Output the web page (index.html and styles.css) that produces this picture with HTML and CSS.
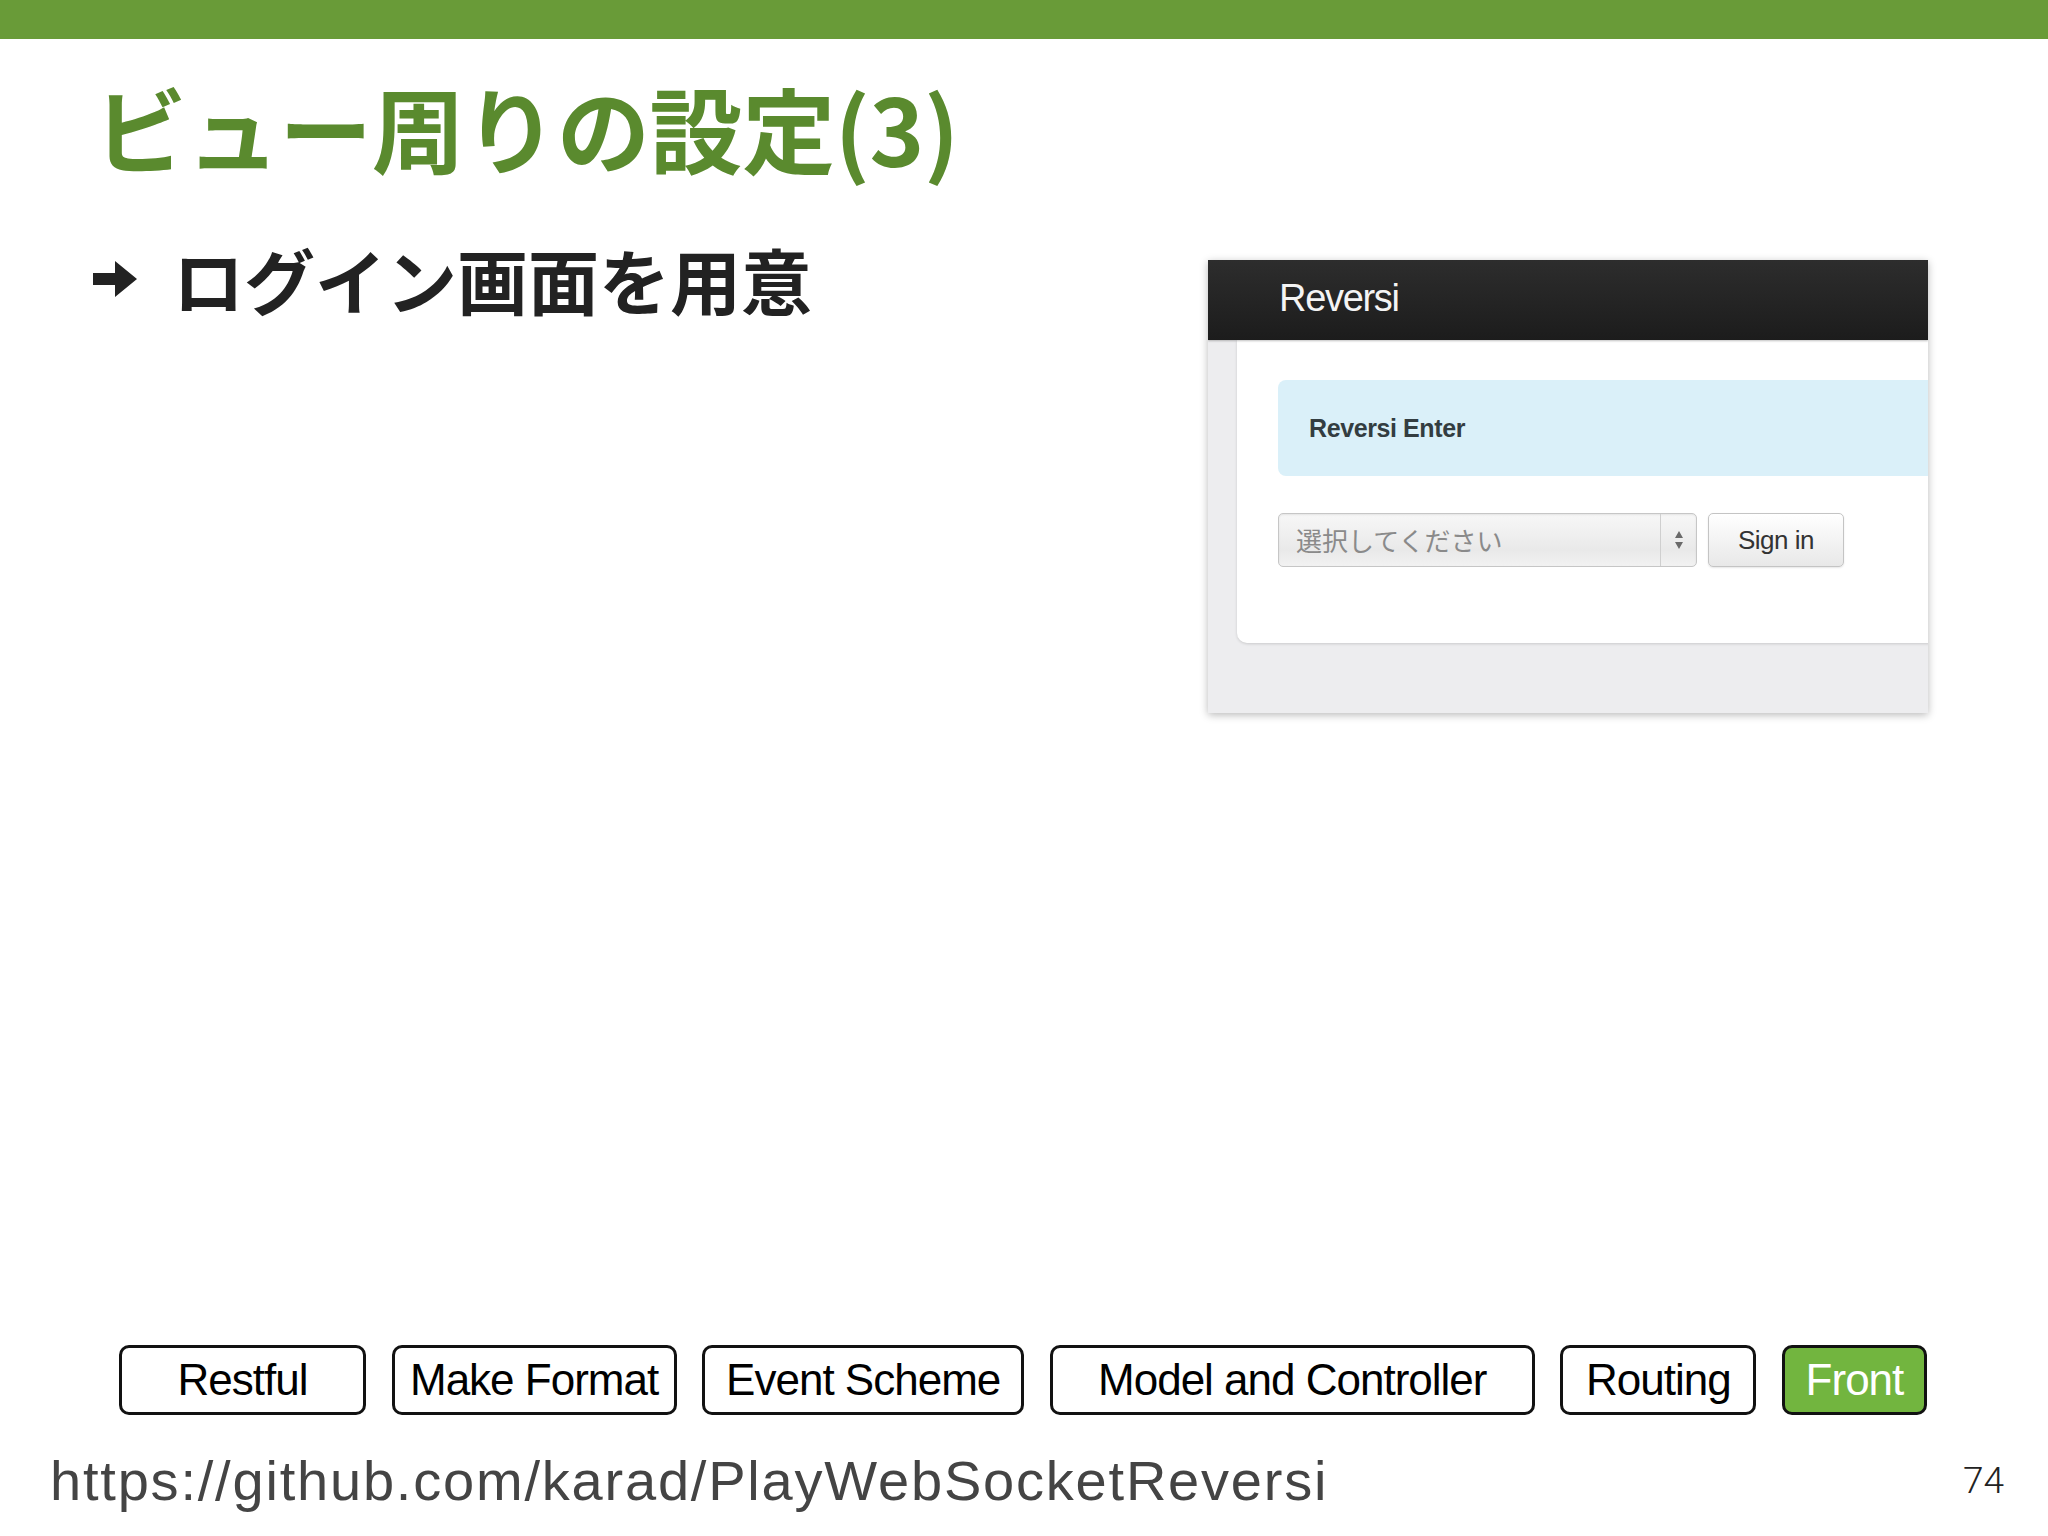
FILE: index.html
```html
<!DOCTYPE html>
<html lang="ja">
<head>
<meta charset="utf-8">
<title>ビュー周りの設定(3)</title>
<link rel="stylesheet" href="styles.css">
</head>
<body>
<div class="topbar"></div>
<header class="slide-head">
  <h1 class="title">ビュー周りの設定(3)</h1>
</header>
<main class="content">
  <div class="bullet">
    <svg class="arrow" width="44" height="36" viewBox="0 0 44 36"><path d="M0 12 H22 V0 L44 18 L22 36 V24 H0 Z" fill="#222"/></svg>
    <span class="bullet-text">ログイン画面を用意</span>
  </div>
  <div class="shot">
    <div class="shot-bar"><span class="brand">Reversi</span></div>
    <div class="shot-card">
      <div class="alert">Reversi Enter</div>
      <div class="form-row">
        <div class="select">
          <span class="select-text">選択してください</span>
          <span class="select-arrows">
            <svg width="10" height="20" viewBox="0 0 10 20"><path d="M5 1 L9 8 H1 Z M5 19 L9 12 H1 Z" fill="#6a6a6a"/></svg>
          </span>
        </div>
        <div class="signin">Sign in</div>
      </div>
    </div>
  </div>
</main>
<div class="spacer"></div>
<nav class="nav">
  <span class="tab tab-restful">Restful</span>
  <span class="tab tab-format">Make Format</span>
  <span class="tab tab-event">Event Scheme</span>
  <span class="tab tab-model">Model and Controller</span>
  <span class="tab tab-routing">Routing</span>
  <span class="tab tab-front active">Front</span>
</nav>
<footer class="footer">
  <span class="url">https://github.com/karad/PlayWebSocketReversi</span>
  <span class="page">74</span>
</footer>
</body>
</html>
```
FILE: styles.css
```css
html, body {
  margin: 0;
  padding: 0;
}
body {
  width: 2048px;
  height: 1536px;
  background: #fff;
  display: flex;
  flex-direction: column;
  overflow: hidden;
  font-family: "Liberation Sans", "Noto Sans CJK JP", sans-serif;
}
.topbar {
  height: 39px;
  background: #699b38;
  flex: none;
}
.slide-head {
  padding-left: 94px;
  margin-top: 41px;
}
.title {
  margin: 0;
  font-family: "Noto Sans CJK JP", sans-serif;
  font-weight: 700;
  font-size: 93px;
  line-height: 1;
  color: #5a8a2e;
  letter-spacing: -0.4px;
}
.content {
  display: flex;
  justify-content: space-between;
  align-items: flex-start;
  padding-left: 93px;
  padding-right: 120px;
  margin-top: 70px;
}
.bullet {
  display: flex;
  align-items: center;
  gap: 36px;
}
.arrow {
  display: block;
}
.bullet-text {
  font-family: "Noto Sans CJK JP", sans-serif;
  font-weight: 700;
  font-size: 71px;
  line-height: 1;
  color: #222;
}
.shot {
  width: 720px;
  height: 453px;
  margin-top: 17px;
  background: #ededef;
  box-shadow: 0 2px 8px rgba(0,0,0,0.28);
  overflow: hidden;
  display: flex;
  flex-direction: column;
}
.shot-bar {
  height: 80px;
  flex: none;
  background: linear-gradient(#2d2d2d, #1c1c1c);
  display: flex;
  align-items: center;
  padding-left: 71px;
  padding-bottom: 4px;
  box-sizing: border-box;
  box-shadow: 0 1px 2px rgba(0,0,0,0.25);
  position: relative;
  z-index: 1;
}
.brand {
  color: #f4f4f4;
  font-size: 38px;
  line-height: 38px;
  letter-spacing: -1.3px;
}
.shot-card {
  margin-left: 29px;
  margin-right: -20px;
  height: 303px;
  flex: none;
  background: #fff;
  border-bottom-left-radius: 10px;
  box-shadow: 0 1px 3px rgba(0,0,0,0.15);
  padding-top: 40px;
  box-sizing: border-box;
}
.alert {
  margin-left: 41px;
  height: 96px;
  background: #daf0f9;
  border-radius: 8px 0 0 8px;
  display: flex;
  align-items: center;
  padding-left: 31px;
  font-weight: 700;
  font-size: 25px;
  line-height: 25px;
  color: #333d41;
  letter-spacing: -0.4px;
}
.form-row {
  margin-top: 37px;
  margin-left: 41px;
  display: flex;
  gap: 11px;
}
.select {
  width: 419px;
  height: 54px;
  box-sizing: border-box;
  border: 1px solid #c6c6c6;
  border-radius: 5px;
  background: linear-gradient(#f7f7f7, #e9e9e9 70%, #f2f2f2);
  display: flex;
  align-items: center;
  box-shadow: inset 0 1px 2px rgba(0,0,0,0.08);
}
.select-text {
  flex: 1;
  padding-left: 17px;
  font-family: "Noto Sans CJK JP", sans-serif;
  font-size: 26px;
  line-height: 1;
  color: #8a8a8a;
}
.select-arrows {
  width: 35px;
  height: 100%;
  border-left: 1px solid #cfcfcf;
  display: flex;
  align-items: center;
  justify-content: center;
}
.signin {
  width: 136px;
  height: 54px;
  box-sizing: border-box;
  border: 1px solid #c4c4c4;
  border-radius: 5px;
  background: linear-gradient(#ffffff, #e8e8e8);
  display: flex;
  align-items: center;
  justify-content: center;
  font-size: 26px;
  color: #333;
  letter-spacing: -0.5px;
  box-shadow: 0 1px 2px rgba(0,0,0,0.1);
}
.spacer {
  flex: 1;
}
.nav {
  display: flex;
  gap: 25.6px;
  padding-left: 119px;
  flex: none;
}
.tab {
  height: 70px;
  box-sizing: border-box;
  border: 3.5px solid #111;
  border-radius: 10px;
  display: flex;
  align-items: center;
  justify-content: center;
  font-size: 44px;
  color: #000;
  letter-spacing: -1px;
  background: #fff;
}
.tab-restful { width: 247px; }
.tab-format { width: 285px; }
.tab-event { width: 322px; }
.tab-model { width: 485px; }
.tab-routing { width: 196px; }
.tab-front { width: 145px; }
.tab.active {
  background: #72b53f;
  color: #fff;
}
.footer {
  display: flex;
  justify-content: space-between;
  align-items: flex-start;
  margin-top: 38px;
  margin-bottom: 27px;
  padding-left: 50px;
  padding-right: 44px;
  flex: none;
}
.url {
  font-size: 56px;
  line-height: 1;
  color: #444;
  letter-spacing: 1.8px;
}
.page {
  margin-top: 9px;
  font-family: "Roboto", sans-serif;
  font-weight: 300;
  font-size: 37px;
  line-height: 1;
  color: #222;
}
```
